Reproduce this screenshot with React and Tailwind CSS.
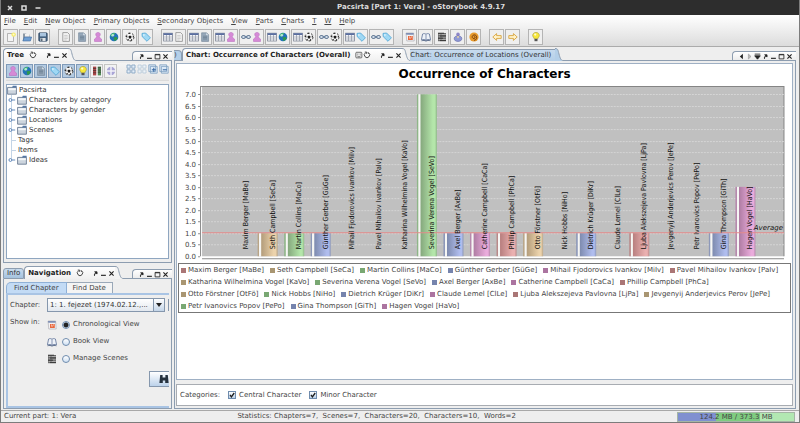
import { useState } from 'react'

const PALETTE = {
  red: { edge: '#b98a8a', dark: '#b98080', light: '#eab0b0', legend: '#aa7676' },
  tan: { edge: '#b9a587', dark: '#b59e7c', light: '#ecd3ac', legend: '#a99672' },
  green: { edge: '#8fb689', dark: '#86a97e', light: '#b4e6aa', legend: '#79a873' },
  blue: { edge: '#8d98b9', dark: '#7f8cb0', light: '#b0bdee', legend: '#7684ad' },
  pink: { edge: '#b689ad', dark: '#b07da4', light: '#eaacdc', legend: '#ab74a0' },
}
const COLORS = ['red', 'tan', 'green', 'blue', 'pink']

const SERIES = [
  ['Maxim Berger [MaBe]', 0],
  ['Seth Campbell [SeCa]', 1],
  ['Martin Collins [MaCo]', 1],
  ['Günther Gerber [GüGe]', 1],
  ['Mihail Fjodorovics Ivankov [MiIv]', 0],
  ['Pavel Mihailov Ivankov [PaIv]', 0],
  ['Katharina Wilhelmina Vogel [KaVo]', 0],
  ['Severina Verena Vogel [SeVo]', 7],
  ['Axel Berger [AxBe]', 1],
  ['Catherine Campbell [CaCa]', 1],
  ['Phillip Campbell [PhCa]', 1],
  ['Otto Förstner [OtFö]', 1],
  ['Nick Hobbs [NiHo]', 0],
  ['Dietrich Krüger [DiKr]', 1],
  ['Claude Lemel [ClLe]', 0],
  ['Ljuba Alekszejeva Pavlovna [LjPa]', 1],
  ['Jevgenyij Anderjevics Perov [JePe]', 0],
  ['Petr Ivanovics Popov [PePo]', 0],
  ['Gina Thompson [GiTh]', 1],
  ['Hagen Vogel [HaVo]', 3],
].map(([name, value], i) => ({ name, value, color: COLORS[i % 5] }))

const MENU = ['File', 'Edit', 'New Object', 'Primary Objects', 'Secondary Objects', 'View', 'Parts', 'Charts', 'T', 'W', 'Help']

const TOOLBAR = [
  [['new'], ['open'], ['save']],
  [['doc'], ['note'], ['person'], ['globe'], ['ball'], ['tag']],
  [
    ['table', 'doc'],
    ['table', 'note'],
    ['table', 'person'],
    ['link', 'person'],
    ['table', 'globe'],
    ['table', 'ball'],
    ['link', 'ball'],
    ['table', 'tag'],
    ['link', 'tag'],
  ],
  [['calendar'], ['book'], ['manage'], ['memoria'], ['spiral']],
  [['left'], ['right']],
  [['bulb']],
]

const GLYPHS = {
  new: (
    <>
      <path d="M1.5 1.5h6v8h-6z" fill="#f4f4f4" stroke="#9a9a9a" strokeWidth=".7" />
      <circle cx="7.6" cy="2.6" r="2.2" fill="#f6ec6a" />
      <circle cx="7.6" cy="2.6" r="1" fill="#fffbd0" />
    </>
  ),
  open: (
    <>
      <path d="M1 8.5V1.5h3l1 1h3v6z" fill="#8e9aa6" />
      <path d="M3 1.8h4.6v3H3z" fill="#f1f1f1" />
      <path d="M.8 9 2.4 5h7.2L8.4 9z" fill="#6f9fd3" stroke="#3f6a9c" strokeWidth=".6" />
    </>
  ),
  save: (
    <>
      <rect x=".7" y=".8" width="8.6" height="8.4" rx="1" fill="#44617f" stroke="#2c435c" strokeWidth=".6" />
      <path d="M2 1h6v3.4H2z" fill="#a9c4de" />
      <path d="M2.4 6h5.2v3H2.4z" fill="#dfe3e6" />
      <path d="M3.2 6.6h1.2V9H3.2z" fill="#3a4a5a" />
    </>
  ),
  doc: (
    <>
      <path d="M1.8.6h4.8l1.8 1.800v7H1.800z" fill="#f5f5f5" stroke="#8c8c8c" strokeWidth=".8" />
      <path d="M3.2 3.4h3.400M3.2 5h3.600M3.2 6.600h3.600M3.2 8h2.400" stroke="#b0b0b0" strokeWidth=".6" />
    </>
  ),
  note: (
    <>
      <path d="M1.600.8h5l2 2v6.600h-7z" fill="#96a8ba" stroke="#6f8294" strokeWidth=".6" />
      <path d="M6.200 1v2.200h2.200z" fill="#dce4ec" />
      <path d="M3 4.200h4M3 5.600h4M3 7h4" stroke="#5d7084" strokeWidth=".6" />
    </>
  ),
  person: (
    <path
      d="M5 .4c1.500 0 2.300 1 2.300 2.100 0 .9-.5 1.400-1 1.800.2 1.200.9 2 2.200 2.700v2.500h-7V7c1.300-.7 2-1.500 2.200-2.700-.5-.4-1-.9-1-1.800C2.700 1.400 3.500.4 5 .4z"
      fill="#d58ad6"
      stroke="#b766ba"
      strokeWidth=".5"
    />
  ),
  globe: (
    <>
      <circle cx="5" cy="5" r="4.300" fill="#2473b8" />
      <path d="M1.400 3.200C2.600 1.400 4.600.8 6 1.200L5.200 3 3.600 3.600 3.400 5.200z" fill="#49c06a" />
      <path d="M4.600 5.200 7.600 5l1 1.600C7.800 8.200 6.400 9 5.400 9.100z" fill="#2f9a4c" />
      <circle cx="3.800" cy="3.200" r="1.300" fill="#d4f4ec" opacity=".8" />
    </>
  ),
  ball: (
    <>
      <circle cx="5" cy="5" r="4" fill="#f6f6f6" stroke="#222" strokeWidth=".8" strokeDasharray="2.4 1.700" />
      <path d="M5 3.400 6.600 4.500 6 6.400H4L3.400 4.500z" fill="#1b1b1b" />
      <path d="M3.400.9h2.400L4.700 2.100zM.8 4.600l1.600-1.200-.2 2.600zM9.200 4.600 7.700 3.600l.2 2.200zM2.600 8.200l.6-1.500 1.400 2.100zM7.400 8.200l-.7-1.500-1.300 2.100z" fill="#1b1b1b" />
    </>
  ),
  tag: (
    <>
      <path d="M1 1.400 4.600 1 9.400 5.800 6 9.300 1.200 4.600z" fill="#9fd8f4" stroke="#4ba3d4" strokeWidth=".8" />
      <circle cx="2.900" cy="3" r=".8" fill="#fff" />
    </>
  ),
  table: (
    <>
      <rect x=".6" y="1.200" width="8.800" height="7.800" fill="#fff" stroke="#7d8494" strokeWidth=".8" />
      <path d="M.6 1.200h8.800v1.900H.6z" fill="#5a6ea0" />
      <path d="M.6 5h8.800M.6 7h8.800M3.500 3v6M6.500 3v6" stroke="#8d93a3" strokeWidth=".7" />
    </>
  ),
  link: (
    <>
      <rect x=".6" y="3.600" width="4" height="2.800" rx="1.400" fill="#dfe8f2" stroke="#5f7692" strokeWidth="1" />
      <rect x="5.400" y="3.600" width="4" height="2.800" rx="1.400" fill="#dfe8f2" stroke="#5f7692" strokeWidth="1" />
      <path d="M3.200 5h3.600" stroke="#7089a6" strokeWidth="1.200" />
    </>
  ),
  calendar: (
    <>
      <path d="M1 1h7.600l.6 8H1.800z" fill="#f2f2f4" stroke="#a5a5ad" strokeWidth=".6" />
      <path d="M1 1h7.600v1.800H1.200z" fill="#7f8fb4" />
      <path d="M3 4h4.800v4H3z" fill="#e8693f" />
      <path d="M4 5h1v2M6 5h1" stroke="#fff" strokeWidth=".6" fill="none" />
    </>
  ),
  book: (
    <>
      <path d="M.4 7.800 1.600 2C3 1.300 4.400 1.600 5 2.400c.6-.8 2-1.100 3.400-.4l1.200 5.800C8 7.200 6 7.400 5 8.400 4 7.400 2 7.200.4 7.800z" fill="#eef2f8" stroke="#5a6f96" strokeWidth=".8" />
      <path d="M5 2.400v6" stroke="#5a6f96" strokeWidth=".7" />
      <path d="M.6 8.800c1.600-.6 3.400-.4 4.400.4 1-.8 2.800-1 4.400-.4" stroke="#3f5377" strokeWidth=".8" fill="none" />
    </>
  ),
  manage: (
    <>
      <path d="M1 1h8v8.200H1z" fill="#6a6a6a" />
      <path d="M1.600 2.600h2M4.400 2.600h4.400M1.600 5h2M4.400 5h4.400M1.600 7.400h2M4.400 7.400h4.400" stroke="#d2d2d2" strokeWidth=".7" />
      <path d="M1 1.200h6M3 4h6M1 6.200h5M3 8.600h6" stroke="#2b2b2b" strokeWidth=".8" />
    </>
  ),
  memoria: (
    <>
      <circle cx="5" cy="2.400" r="1.800" fill="#8d86c8" />
      <path d="M1.200 6.400C1.200 4.600 3 4 5 4s3.800.6 3.800 2.400C8.800 8.600 7 9.400 5 9.400S1.200 8.600 1.200 6.400z" fill="#8f9ad6" stroke="#5d62a4" strokeWidth=".6" />
      <path d="M3.600 4.200 5 6.600l1.400-2.400z" fill="#f0d8a0" />
    </>
  ),
  spiral: (
    <>
      <circle cx="5" cy="5" r="4.600" fill="#e79a2c" />
      <path d="M5 5c.8-.8 1.600.4.8 1.200C4.600 7.200 3 6 3.200 4.600 3.600 2.800 6 2.200 7.200 3.800c1.200 1.800.2 4.400-2.200 4.600" stroke="#6f3a0c" strokeWidth=".9" fill="none" />
    </>
  ),
  left: <path d="M.8 5 4.600 1.600v2h4.600v2.800H4.600v2z" fill="#fff2c8" stroke="#d39a2c" strokeWidth=".8" />,
  right: <path d="M9.200 5 5.400 1.600v2H.8v2.800h4.600v2z" fill="#fff2c8" stroke="#d39a2c" strokeWidth=".8" />,
  bulb: (
    <>
      <path d="M5 .4c2 0 3.300 1.400 3.300 3 0 1.500-1.300 2-1.500 3.400H3.200C3 5.400 1.700 4.900 1.700 3.400c0-1.600 1.300-3 3.300-3z" fill="#f7e83c" stroke="#a89a2a" strokeWidth=".6" />
      <circle cx="4.200" cy="2.600" r="1.100" fill="#fffcd4" />
      <path d="M3.500 6.900h3v2.300h-3z" fill="#555" />
    </>
  ),
  strips: (
    <>
      <path d="M1 .6h3.200v8.800H1z" fill="#b04848" />
      <path d="M5.800.6H9v8.800H5.800z" fill="#4f8a55" />
      <path d="M1 2.400h3.200M1 4.600h3.200M1 6.800h3.200M5.800 1.800H9M5.800 4H9M5.800 6.200H9" stroke="#3a3030" strokeWidth=".7" />
    </>
  ),
  cross: (
    <>
      <circle cx="5" cy="5" r="4.200" fill="#a9a4d6" />
      <path d="M5 0v10M0 5h10" stroke="#f2f2f8" strokeWidth="1.400" />
    </>
  ),
  grid: (
    <path d="M1 1h3.200v3.200H1zM5.800 1H9v3.200H5.800zM1 5.800h3.200V9H1zM5.800 5.800H9V9H5.800z" fill="#e4eef8" stroke="#88a6c4" strokeWidth=".9" />
  ),
  gridLight: (
    <path d="M1 1h3.200v3.200H1zM5.800 1H9v3.200H5.800zM1 5.800h3.200V9H1zM5.800 5.800H9V9H5.800z" fill="#eef3f8" stroke="#b4c6d8" strokeWidth=".8" />
  ),
  expand: (
    <>
      <path d="M.8.8h6.800v6.800H.8zM2.400 2.400h6.800v6.800H2.400z" fill="#dce9f6" stroke="#7f9fc0" strokeWidth=".8" />
      <path d="M5.800 3.800v4M3.800 5.800h4" stroke="#2f62a0" strokeWidth="1" />
    </>
  ),
  collapse: (
    <>
      <path d="M.8.8h6.800v6.800H.8zM2.400 2.400h6.800v6.800H2.400z" fill="#dce9f6" stroke="#7f9fc0" strokeWidth=".8" />
      <path d="M3.800 5.800h4" stroke="#2f62a0" strokeWidth="1" />
    </>
  ),
  folder: (
    <>
      <path d="M.6 2.400h8.800v6.800H.6z" fill="#cdd5de" stroke="#5a6f88" strokeWidth=".8" />
      <path d="M5.800.8h3.800v1.800H5z" fill="#5578a6" />
      <path d="M1.200 3.200h7.600v2H1.200z" fill="#f3f6f9" />
    </>
  ),
  knob: (
    <>
      <circle cx="3" cy="5" r="1.800" fill="#fff" stroke="#5f86b8" strokeWidth="1.200" />
      <path d="M4.800 5H9" stroke="#5f86b8" strokeWidth="1.200" />
    </>
  ),
  refresh: <path d="M3.200 2.200A3.300 3.300 0 1 0 6.800 2.200M2.200 1.400h2.400v2.200M7.400 3.600 6.400 1.600" fill="none" stroke="#333" strokeWidth="1.100" />,
  snapshot: (
    <>
      <rect x="1" y="1.600" width="7.600" height="7" rx="1" fill="#e8e8e8" stroke="#444" strokeWidth=".9" />
      <path d="M3 4h1M6 4h1M3 6.400c1 1 2.800 1 3.800 0" fill="none" stroke="#444" strokeWidth=".9" />
    </>
  ),
  pin: <path d="M3.600 8.400c-.6-2 .2-3.800 2-4.400M3.800 2.600h3.400v3.200z" fill="#222" stroke="#222" strokeWidth="1.200" />,
  min: <path d="M1.400 7.600h7" stroke="#222" strokeWidth="1.600" />,
  max: <path d="M1.600 2h6.800v6.400H1.600zM1.600 2.600h6.800" fill="none" stroke="#222" strokeWidth="1.200" />,
  close: <path d="m2 2 6 6M8 2 2 8" stroke="#222" strokeWidth="1.600" />,
  prev: <path d="M7 1v8L2.600 5z" fill="#222" />,
  next: <path d="M3.400 1.400v7.200L7.200 5z" fill="#bbb" stroke="#888" strokeWidth=".7" />,
  list: <path d="M1 1.600h8M1 4h8L5 8.800z" fill="#222" stroke="#222" strokeWidth="1.200" />,
  binoculars: (
    <path d="M1.200 1h2.400v2.600h2.800V1h2.400l.8 8H6.200V6.400H3.800V9H.4z" fill="#26323e" />
  ),
}

function Icon({ name, className = 'size-[10px]' }) {
  return (
    <svg viewBox="0 0 10 10" className={`shrink-0 ${className}`} aria-hidden="true">
      {GLYPHS[name]}
    </svg>
  )
}

function IconButton({ name, className }) {
  return (
    <button aria-label={name} className="flex">
      <Icon name={name} className={className} />
    </button>
  )
}

function TitleBar() {
  return (
    <header className="flex h-[15px] items-center gap-[6px] bg-[#2d2d2d] px-[5px] text-[#dcdcdc]">
      {['m3 3 4 4M7 3 3 7', 'M3 3h4v4H3z', 'M2.500 5h5'].map((d) => (
        <button key={d} aria-label="window control" className="flex">
          <svg viewBox="1 1 8 8" className="size-[8px]" fill="none" stroke="#dcdcdc" strokeWidth="1.500">
            <path d={d} />
          </svg>
        </button>
      ))}
      <h1 className="flex-1 text-center font-bold">Pacsirta [Part 1: Vera] - oStorybook 4.9.17</h1>
    </header>
  )
}

function MenuBar() {
  return (
    <nav className="flex h-[12px] items-center gap-[8px] px-[3px]">
      {MENU.map((item) => (
        <button key={item} className="whitespace-nowrap">
          <span className="underline">{item[0]}</span>
          {item.slice(1)}
        </button>
      ))}
    </nav>
  )
}

function ToolBar() {
  return (
    <div className="flex h-[19px] items-center gap-[8px] px-[2px]">
      {TOOLBAR.map((group, i) => (
        <div key={i} className="flex gap-px">
          {group.map((icons) => (
            <button
              key={icons.join('-')}
              aria-label={icons.join(' ')}
              className={`flex h-[16px] items-center justify-center border border-[#b4b4b4] bg-[#efefef] ${
                icons.length > 1 ? 'w-[25px] gap-px' : 'w-[15px]'
              }`}
            >
              {icons.map((name) => (
                <Icon key={name} name={name} />
              ))}
            </button>
          ))}
        </div>
      ))}
    </div>
  )
}

function Slant({ blue }) {
  return (
    <svg viewBox="0 0 8 13" preserveAspectRatio="none" className="h-[13px] w-[8px] shrink-0">
      <path d="M0 .5C3 .5 3 2 4 6S6 12.500 8 12.500V13H0z" fill={blue ? '#b4cfe8' : '#f4f4f4'} />
      <path d="M0 .5C3 .5 3 2 4 6S6 12.500 8 12.500" fill="none" stroke="#8d9db0" />
    </svg>
  )
}

function ActiveTab({ title, icons }) {
  return (
    <>
      <div className="flex h-[13px] items-center rounded-tl-[4px] border-l border-t border-[#8d9db0] bg-linear-to-b from-white to-[#f0f0f0] pl-[3px] font-bold text-[#222]">
        <span className="whitespace-nowrap pr-[5px]">{title}</span>
        {icons.map((name) => (
          <IconButton key={name} name={name} className="size-[8px]" />
        ))}
        <div className="flex gap-px pl-[8px]">
          <IconButton name="pin" className="size-[7px]" />
          <IconButton name="min" className="size-[7px]" />
          <IconButton name="close" className="size-[7px]" />
        </div>
      </div>
      <Slant />
    </>
  )
}

function DockControls({ icons }) {
  return (
    <div className="flex h-[10px] items-center gap-px self-end rounded-tl-[4px] border border-r-0 border-[#8d9db0] bg-linear-to-b from-white to-[#ececec] pl-[5px] pr-[3px]">
      {icons.map((name) => (
        <IconButton key={name} name={name} className="size-[7px]" />
      ))}
    </div>
  )
}

function Filler() {
  return <div className="flex-1 border-b border-[#8d9db0]" />
}

const TREE = [
  ['Characters by category', true],
  ['Characters by gender', true],
  ['Locations', true],
  ['Scenes', true],
  ['Tags', false],
  ['Items', false],
  ['Ideas', true],
]
const FILTERS = ['person', 'globe', 'note', 'tag', 'ball', 'bulb', 'strips', 'cross']

function TreeDock() {
  return (
    <section className="flex flex-1 flex-col">
      <div className="flex h-[13px]">
        <ActiveTab title="Tree" icons={['refresh']} />
        <Filler />
        <DockControls icons={['pin', 'min', 'max', 'close']} />
      </div>
      <div className="flex flex-1 flex-col gap-[3px] border border-t-0 border-[#8d9db0] p-[2px] pb-[3px]">
        <div className="flex h-[18px] items-start justify-between border-b border-[#dadada] bg-linear-to-b from-[#f4f4f4] to-[#e6e6e6] pt-px">
          <div className="flex gap-px">
            {FILTERS.map((name, i) => (
              <button
                key={name}
                aria-label={name}
                aria-pressed={i < 6}
                className={`flex h-[14px] w-[13px] items-center justify-center border ${
                  i < 6 ? 'border-[#7f9ab8] bg-[#b4cbe2]' : 'border-[#c4c4c4] bg-[#f2f2f2]'
                }`}
              >
                <Icon name={name} />
              </button>
            ))}
          </div>
          <div className="flex gap-px">
            {['grid', 'gridLight', 'expand', 'collapse'].map((name) => (
              <IconButton key={name} name={name} />
            ))}
          </div>
        </div>
        <div className="flex-1 border border-[#8fa6c0] bg-white text-[#333]">
          <div className="flex h-[10px] items-center gap-[2px]">
            <Icon name="folder" />
            Pacsirta
          </div>
          <ul className="relative">
            <li className="absolute bottom-[5px] left-[4px] top-0 w-px bg-[#c3d4e6]" />
            {TREE.map(([label, branch]) => (
              <li key={label} className="relative flex h-[10px] items-center">
                {branch ? (
                  <>
                    <Icon name="knob" className="mr-px ml-px size-[8px]" />
                    <Icon name="folder" className="mr-[2px] size-[10px]" />
                  </>
                ) : (
                  <span className="mr-[2px] ml-[5px] h-px w-[4px] bg-[#c3d4e6]" />
                )}
                {label}
              </li>
            ))}
          </ul>
        </div>
      </div>
    </section>
  )
}

const VIEWS = [
  ['Chronological View', 'calendar'],
  ['Book View', 'book'],
  ['Manage Scenes', 'manage'],
]

function NavigationDock() {
  const [view, setView] = useState(VIEWS[0][0])

  return (
    <section>
      <div className="flex h-[13px]">
        <button className="h-[11px] self-end rounded-t-[3px] border border-[#8d9db0] bg-linear-to-b from-[#c9dcee] to-[#a5c2de] px-[3px] leading-[9px] text-[#333]">
          Info
        </button>
        <ActiveTab title="Navigation" icons={['refresh']} />
        <Filler />
        <DockControls icons={['pin', 'min', 'max', 'close']} />
      </div>
      <div className="h-[130px] border border-t-0 border-[#8d9db0] px-[2px] pb-px pt-[3px]">
        <div className="flex h-[11px] items-stretch">
          <button className="rounded-tl-[5px] border border-b-0 border-[#8fb0d6] bg-[#c3dbf5] px-[7px] leading-[10px]">Find Chapter</button>
          <button className="border border-b-0 border-l-0 border-[#9aa8b8] bg-[#f4f4f4] px-[6px] leading-[10px]">Find Date</button>
        </div>
        <div className="h-[115px] overflow-hidden border-2 border-r-0 border-[#a9c4e4] pl-[2px] pt-[3px]">
          <div className="flex items-center">
            <label htmlFor="chapter" className="w-[37px] shrink-0">
              Chapter:
            </label>
            <div className="relative w-[118px] shrink-0">
              <select
                id="chapter"
                className="block h-[14px] w-full appearance-none border border-[#8597ad] bg-linear-to-b from-white to-[#e2e8ef] pl-[2px] pr-[12px] text-[7px] text-[#333]"
              >
                <option>1: 1. fejezet (1974.02.12.,...</option>
              </select>
              <span className="pointer-events-none absolute inset-y-0 right-0 flex w-[12px] items-center justify-center border border-[#8597ad] bg-linear-to-b from-white to-[#c3d5e8]">
                <svg viewBox="0 0 6 4" className="h-[4px] w-[6px]">
                  <path d="M0 0h6L3 4z" fill="#222" />
                </svg>
              </span>
            </div>
            <button aria-label="Previous chapter" className="ml-[3px] h-[12px] w-[18px] shrink-0 border border-[#8597ad] bg-[#dce6f0]" />
          </div>
          <div className="mt-[4px] flex">
            <span className="w-[37px] shrink-0 leading-[12px]">Show in:</span>
            <div className="flex flex-col">
              {VIEWS.map(([label, icon]) => (
                <label key={label} className="flex h-[17px] items-center">
                  <Icon name={icon} />
                  <input
                    type="radio"
                    name="view"
                    checked={view === label}
                    onChange={() => setView(label)}
                    className="ml-[5px] mr-[3px] size-[8px] appearance-none rounded-full border border-[#6f8cae] bg-linear-to-b from-white to-[#cfe0f2] checked:bg-[radial-gradient(circle,#222_0_2px,#dce8f4_3px)]"
                  />
                  {label}
                </label>
              ))}
            </div>
          </div>
          <button
            aria-label="Find"
            className="ml-[139px] mt-[4px] flex h-[16px] w-[32px] items-center border border-[#8597ad] bg-linear-to-b from-white to-[#bcd2ea] pl-[9px]"
          >
            <Icon name="binoculars" />
          </button>
        </div>
      </div>
    </section>
  )
}

const BASE = 172
const UNIT = 23.1
const SLOT = 26.5

function OccurrenceChart() {
  const ticks = Array.from({ length: 15 }, (_, i) => i / 2)

  return (
    <svg viewBox="0 0 614 176" className="w-full font-['DejaVu_Sans',sans-serif] text-[7px]">
      <defs>
        {COLORS.map((c) => (
          <linearGradient key={c} id={`bar-${c}`}>
            <stop offset="0" stopColor={PALETTE[c].edge} />
            <stop offset=".06" stopColor={PALETTE[c].edge} />
            <stop offset=".09" stopColor="#f6f6f4" />
            <stop offset=".16" stopColor="#f6f6f4" />
            <stop offset=".2" stopColor={PALETTE[c].dark} />
            <stop offset=".8" stopColor={PALETTE[c].light} />
            <stop offset=".9" stopColor={PALETTE[c].light} />
            <stop offset="1" stopColor={PALETTE[c].edge} />
          </linearGradient>
        ))}
      </defs>
      <rect x="25" y="2" width="581" height="170" fill="#c0c0c0" />
      <path d="M24 2.500h582V172" fill="none" stroke="#858585" />
      <path d="M23.500 2v170M25 174.500h581" stroke="#8a8a8a" />
      {ticks.map((t) => {
        const y = Math.round(BASE - t * UNIT) + 0.5
        return (
          <g key={t}>
            <path d={`M21 ${y}h2`} stroke="#8a8a8a" />
            {t > 0 && <path d={`M25 ${y}h581`} stroke="#dadada" strokeWidth=".8" strokeDasharray="2 1" />}
            <text x="19" y={y + 2.5} textAnchor="end" fill="#444">
              {t.toFixed(1)}
            </text>
          </g>
        )
      })}
      {SERIES.map(({ name, value, color }, i) =>
        value > 0 ? (
          <rect key={name} x={54 + i * SLOT} y={BASE - value * UNIT} width="20" height={value * UNIT} fill={`url(#bar-${color})`} />
        ) : null,
      )}
      <path d="M25 148.500h581" stroke="#e58a8a" />
      <text x="605" y="146" textAnchor="end" fontStyle="italic" fill="#111">
        Average
      </text>
      <g className="font-['DejaVu_Sans_Condensed','DejaVu_Sans',sans-serif]" fill="#111">
        {SERIES.map(({ name }, i) => (
          <text key={name} transform={`translate(${71 + i * SLOT} 165) rotate(-90)`}>
            {name}
          </text>
        ))}
      </g>
    </svg>
  )
}

function Legend() {
  return (
    <ul className="mx-px flex flex-wrap gap-x-[6px] border border-[#777] px-[2px] text-[#444]">
      {SERIES.map(({ name, color }) => (
        <li key={name} className="flex h-[12px] items-center gap-[2px] whitespace-nowrap">
          <span className="size-[5px]" style={{ backgroundColor: PALETTE[color].legend }} />
          {name}
        </li>
      ))}
    </ul>
  )
}

function CategoryBox({ label }) {
  return (
    <label className="flex items-center gap-[3px]">
      <span className="relative flex">
        <input
          type="checkbox"
          defaultChecked
          className="peer size-[8px] appearance-none border border-[#6f8cae] bg-linear-to-b from-white to-[#b9d0e8]"
        />
        <svg viewBox="0 0 8 8" className="pointer-events-none absolute inset-0 hidden size-[8px] peer-checked:block">
          <path d="M2 3.800 3.400 5.800 6.200 2" fill="none" stroke="#1d1d1d" strokeWidth="1.300" />
        </svg>
      </span>
      {label}
    </label>
  )
}

function ChartDock() {
  return (
    <section className="flex min-w-0 flex-1 flex-col">
      <div className="flex h-[13px]">
        <button className="h-[11px] w-[8px] self-end rounded-tr-[4px] border border-l-0 border-[#8d9db0] bg-[#b4cfe8] text-left leading-[9px]">)</button>
        <ActiveTab title="Chart: Occurrence of Characters (Overall)" icons={['snapshot', 'refresh']} />
        <button className="h-[12px] self-end whitespace-nowrap border-t border-[#8d9db0] bg-linear-to-b from-[#c6daee] to-[#b4cfe8] pr-[4px] leading-[11px] text-[#333]">
          Chart: Occurrence of Locations (Overall)
        </button>
        <Slant blue />
        <Filler />
        <DockControls icons={['prev', 'next', 'list', 'pin', 'min', 'max', 'close']} />
      </div>
      <div className="flex flex-1 flex-col gap-[4px] border border-t-0 border-[#8d9db0] bg-[#eeeeee] p-[2px] pl-px">
        <div className="flex-1 border border-[#9fb0c4] bg-white">
          <h2 className="text-center text-[12px] font-bold leading-[20px] text-black">Occurrence of Characters</h2>
          <OccurrenceChart />
          <div className="mt-[3px]">
            <Legend />
          </div>
        </div>
        <div className="flex h-[22px] items-center gap-[8px] border border-[#a8acb2] bg-white px-[3px]">
          <span>Categories:</span>
          <CategoryBox label="Central Character" />
          <CategoryBox label="Minor Character" />
        </div>
      </div>
    </section>
  )
}

function StatusBar() {
  return (
    <footer className="flex h-[12px] items-center justify-between border-t border-[#a8a8a8] bg-[#eeeeee] pl-[3px] pr-[4px]">
      <span>Current part: 1: Vera</span>
      <span className="whitespace-pre">Statistics: Chapters=7,  Scenes=7,  Characters=20,  Characters=10,  Words=2</span>
      <span className="h-[10px] w-[118px] border border-[#a5b5a5] bg-[linear-gradient(90deg,#8090d0_0_33%,#7fcc80_33%_71%,#b2e8b2_71%)] text-center leading-[8px]">
        124.2 MB / 373.3 MB
      </span>
    </footer>
  )
}

export default function App() {
  return (
    <div className="flex min-h-screen flex-col border-x border-b border-[#7c7c7c] bg-[#eeeeee] font-['DejaVu_Sans',sans-serif] text-[7px] leading-[9px] text-[#444]">
      <TitleBar />
      <div className="border-b border-[#ababab] bg-linear-to-b from-white to-[#dcdcdc]">
        <MenuBar />
        <ToolBar />
      </div>
      <main className="flex flex-1 gap-[2px] pb-px pl-[2px] pr-[3px] pt-px">
        <div className="flex w-[169px] shrink-0 flex-col gap-[3px]">
          <TreeDock />
          <NavigationDock />
        </div>
        <ChartDock />
      </main>
      <StatusBar />
    </div>
  )
}
